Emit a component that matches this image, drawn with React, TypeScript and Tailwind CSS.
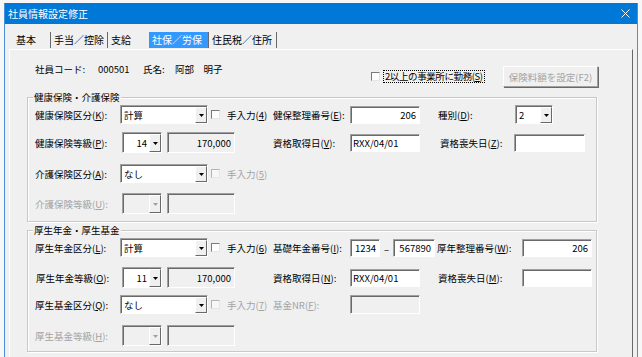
import React from "react";

type EditProps = { w: string; h?: string; v?: string; right?: boolean; disabled?: boolean };

function Edit({ w, h = "h-[18px]", v = "", right = false, disabled = false }: EditProps) {
  return (
    <div
      className={`${w} ${h} shrink-0 flex items-center border border-[#a0a0a0] border-r-white border-b-white shadow-[inset_1px_1px_0_#696969] ${
        disabled ? "bg-[#f0f0f0]" : "bg-white"
      } ${right ? "justify-end pr-[3px]" : "pl-[2px]"} text-[9.5px] leading-[12px] whitespace-nowrap`}
    >
      {v}
    </div>
  );
}

function Tri({ c }: { c: string }) {
  return (
    <svg width="5" height="3" viewBox="0 0 5 3">
      <path d="M0 0H5L2.5 3Z" fill={c} />
    </svg>
  );
}

function Combo({ w, h = "h-[19px]", v = "", right = false, disabled = false }: EditProps) {
  return (
    <div
      className={`${w} ${h} shrink-0 flex border border-[#a0a0a0] border-r-white border-b-white shadow-[inset_1px_1px_0_#696969] ${
        disabled ? "bg-[#f0f0f0]" : "bg-white"
      }`}
    >
      <div
        className={`flex-1 flex items-center text-[9.5px] leading-[12px] whitespace-nowrap ${
          right ? "justify-end pr-[2px]" : "pl-[3px]"
        }`}
      >
        {v}
      </div>
      <div className="w-[12px] mt-[1px] bg-[#f0f0f0] border border-white border-r-[#696969] border-b-[#696969] flex items-center justify-center">
        <Tri c={disabled ? "#a0a0a0" : "#000000"} />
      </div>
    </div>
  );
}

function Check({ disabled = false }: { disabled?: boolean }) {
  return (
    <div
      className={`w-[9px] h-[9px] shrink-0 border ${
        disabled ? "border-[#b4b4b4] bg-[#f7f7f7]" : "border-[#7a7a7a] bg-white"
      } border-r-[#e6e6e6] border-b-[#e6e6e6]`}
    />
  );
}

function L({ w, children, grey = false, cls = "" }: { w: string; children: React.ReactNode; grey?: boolean; cls?: string }) {
  return (
    <div
      className={`${w} shrink-0 text-[9.5px] leading-[12px] whitespace-nowrap ${grey ? "text-[#a3a3a3]" : "text-black"} ${cls}`}
    >
      {children}
    </div>
  );
}

function Group({ title, h, children, cls = "" }: { title: string; h: string; children: React.ReactNode; cls?: string }) {
  return (
    <div
      className={`relative w-[570px] ${h} border border-[#c8c8c8] shadow-[inset_1px_1px_0_#ffffff,1px_1px_0_#ffffff] pl-[7px] ${cls}`}
    >
      <div className="absolute left-[5px] top-[-7px] px-[1px] bg-[#f0f0f0] text-[9.5px] leading-[12px] whitespace-nowrap">
        {title}
      </div>
      {children}
    </div>
  );
}

export default function App() {
  return (
    <div className="w-[642px] h-[357px] overflow-hidden bg-[#f7f7f7] font-['Noto_Sans_CJK_JP',sans-serif] text-black">
      <div className="ml-[4px] mt-[3px] w-[634px] h-[360px] border-l border-r border-[#4a90d9] bg-[#f0f0f0] flex flex-col">
        {/* title bar */}
        <div className="h-[21px] shrink-0 bg-[#0078d7] flex items-center justify-between pl-[3px] pr-[7px] text-white text-[10px] leading-[12px]">
          <span>社員情報設定修正</span>
          <svg width="9" height="9" viewBox="0 0 9 9">
            <path d="M0.5 0.5L8.5 8.5M8.5 0.5L0.5 8.5" stroke="#ffffff" strokeWidth="1" />
          </svg>
        </div>

        {/* tabs */}
        <div className="h-[25px] shrink-0 pt-[8px] pl-[5px] flex items-start text-[10px] leading-[16px]">
          <div className="w-[41px] h-[16px] pl-[6px] border-r border-[#696969]">基本</div>
          <div className="w-[57px] h-[16px] pl-[3px] border-r border-[#696969]">手当／控除</div>
          <div className="w-[41px] h-[16px] pl-[3px]">支給</div>
          <div className="w-[60px] h-[16px] pl-[3px] bg-[#3399ff] text-white border-r border-[#696969]">社保／労保</div>
          <div className="w-[68px] h-[16px] pl-[3px] border-r border-[#696969]">住民税／住所</div>
        </div>

        {/* panel */}
        <div className="ml-[4px] w-[624px] flex-1 border border-white border-r-[#696969] border-b-[#696969] pl-[17px]">
          {/* top row */}
          <div className="h-[47px] flex items-start">
            <div className="w-[344px] pt-[13px] pl-[8px] flex text-[9.5px] leading-[12px] whitespace-nowrap">
              <span className="w-[63px]">社員コード:</span>
              <span className="w-[45px]">000501</span>
              <span className="w-[32px]">氏名:</span>
              <span>阿部　明子</span>
            </div>
            <div className="mt-[16px] h-[21px] flex items-center">
              <div className="w-[132px] shrink-0 flex items-center">
                <Check />
                <div className="ml-[3px] h-[13px] border border-dotted border-black pl-[1px] pr-[1px] text-[9.5px] leading-[11px] tracking-[-0.4px] whitespace-nowrap">
                  2以上の事業所に勤務(<u>S</u>)
                </div>
              </div>
              <div className="w-[95px] h-[21px] flex items-center justify-center border border-white border-r-[#a0a0a0] border-b-[#a0a0a0] shadow-[1px_1px_0_#696969] text-[#a3a3a3] text-[9.5px] leading-[12px] whitespace-nowrap">
                保険料額を設定(F2)
              </div>
            </div>
          </div>

          {/* group 1 */}
          <Group title="健康保険・介護保険" h="h-[125px]">
            <div className="mt-[6px] h-[21px] flex items-center">
              <L w="w-[85px]">健康保険区分(<u>K</u>):</L>
              <Combo w="w-[88px]" v="計算" />
              <div className="ml-[3px]"><Check /></div>
              <L w="w-[46px]" cls="ml-[7px]">手入力(<u>4</u>)</L>
              <L w="w-[77px]">健保整理番号(<u>E</u>):</L>
              <Edit w="w-[70px]" v="206" right />
              <L w="w-[77px]" cls="ml-[18px]">種別(<u>D</u>):</L>
              <Combo w="w-[38px]" v="2" />
            </div>
            <div className="mt-[7px] h-[21px] flex items-center">
              <L w="w-[85px]">健康保険等級(<u>P</u>):</L>
              <div className="ml-[2px]"><Combo w="w-[40px]" h="h-[21px]" v="14" right /></div>
              <div className="ml-[5px]"><Edit w="w-[68px]" h="h-[21px]" v="170,000" right disabled /></div>
              <L w="w-[77px]" cls="ml-[38px]">資格取得日(<u>V</u>):</L>
              <Edit w="w-[70px]" v="RXX/04/01" />
              <L w="w-[74px]" cls="ml-[20px]">資格喪失日(<u>Z</u>):</L>
              <Edit w="w-[71px]" />
            </div>
            <div className="mt-[10px] h-[21px] flex items-center">
              <L w="w-[85px]">介護保険区分(<u>A</u>):</L>
              <Combo w="w-[88px]" v="なし" />
              <div className="ml-[3px]"><Check disabled /></div>
              <L w="w-[46px]" cls="ml-[7px]" grey>手入力(<u>5</u>)</L>
            </div>
            <div className="mt-[9px] h-[21px] flex items-center">
              <L w="w-[85px]" grey>介護保険等級(<u>U</u>):</L>
              <div className="ml-[2px]"><Combo w="w-[40px]" h="h-[21px]" disabled /></div>
              <div className="ml-[5px]"><Edit w="w-[68px]" h="h-[21px]" disabled /></div>
            </div>
          </Group>

          {/* group 2 */}
          <Group title="厚生年金・厚生基金" h="h-[122px]" cls="mt-[8px]">
            <div className="mt-[6px] h-[21px] flex items-center">
              <L w="w-[85px]">厚生年金区分(<u>L</u>):</L>
              <Combo w="w-[88px]" v="計算" />
              <div className="ml-[3px]"><Check /></div>
              <L w="w-[46px]" cls="ml-[7px]">手入力(<u>6</u>)</L>
              <L w="w-[77px]">基礎年金番号(<u>I</u>):</L>
              <Edit w="w-[30px]" v="1234" right />
              <div className="w-[13px] shrink-0 text-center text-[9.5px] leading-[12px] pt-[3px]">–</div>
              <Edit w="w-[42px]" v="567890" right />
              <L w="w-[85px]" cls="ml-[2px]">厚年整理番号(<u>W</u>):</L>
              <Edit w="w-[70px]" v="206" right />
            </div>
            <div className="mt-[9px] h-[21px] flex items-center">
              <L w="w-[85px]" cls="pl-[1px]">厚生年金等級(<u>O</u>):</L>
              <div className="ml-[2px]"><Combo w="w-[40px]" h="h-[21px]" v="11" right /></div>
              <div className="ml-[5px]"><Edit w="w-[68px]" h="h-[21px]" v="170,000" right disabled /></div>
              <L w="w-[77px]" cls="ml-[38px]">資格取得日(<u>N</u>):</L>
              <Edit w="w-[70px]" v="RXX/04/01" />
              <L w="w-[84px]" cls="ml-[18px]">資格喪失日(<u>M</u>):</L>
              <Edit w="w-[70px]" />
            </div>
            <div className="mt-[6px] h-[21px] flex items-center">
              <L w="w-[85px]">厚生基金区分(<u>Q</u>):</L>
              <Combo w="w-[88px]" v="なし" />
              <div className="ml-[3px]"><Check disabled /></div>
              <L w="w-[46px]" cls="ml-[7px]" grey>手入力(<u>7</u>)</L>
              <L w="w-[77px]" grey>基金NR(<u>F</u>):</L>
              <Edit w="w-[70px]" h="h-[19px]" disabled />
            </div>
            <div className="mt-[10px] h-[21px] flex items-center">
              <L w="w-[85px]" grey>厚生基金等級(<u>H</u>):</L>
              <div className="ml-[2px]"><Combo w="w-[40px]" h="h-[21px]" disabled /></div>
              <div className="ml-[5px]"><Edit w="w-[68px]" h="h-[21px]" disabled /></div>
            </div>
          </Group>
        </div>
      </div>
    </div>
  );
}
